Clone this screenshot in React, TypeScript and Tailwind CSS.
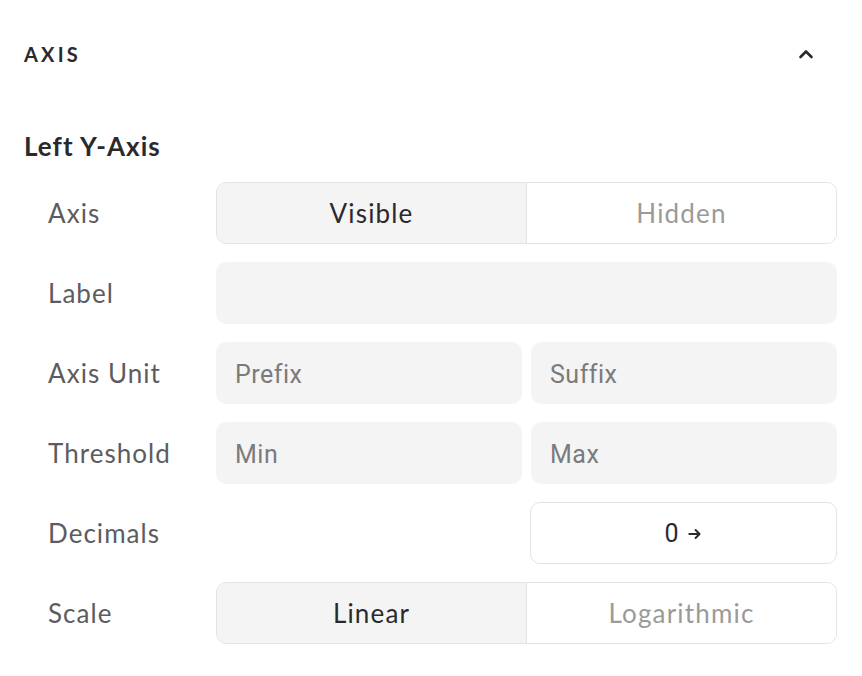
import React from "react";

const font = { fontFamily: "Lato, 'Noto Sans', sans-serif" };

function Label({ children }: { children: React.ReactNode }) {
  return (
    <div className="flex h-[62px] items-center pl-6 text-[26px] tracking-[0.04em] text-[#5c5c60]">{children}</div>
  );
}

function Segmented({ left, right }: { left: string; right: string }) {
  return (
    <div className="flex h-[62px] overflow-hidden rounded-[10px] border border-[#e3e3e3] text-[26px] tracking-[0.045em]">
      <div className="flex flex-1 items-center justify-center bg-[#f4f4f4] text-[#2a2a2e]">{left}</div>
      <div className="w-px bg-[#e3e3e3]" />
      <div className="flex flex-1 items-center justify-center bg-white text-[#9a9a9a]">{right}</div>
    </div>
  );
}

function Input({ placeholder }: { placeholder?: string }) {
  return (
    <div
      className="flex h-[62px] flex-1 items-center rounded-[10px] bg-[#f4f4f4] px-[19px] pt-[3px] text-[25px] tracking-[0.02em] text-[#7b7b7b]"
      style={{ fontFamily: "Roboto, 'Noto Sans', sans-serif" }}
    >
      {placeholder}
    </div>
  );
}

export default function App() {
  return (
    <div className="min-h-[676px] w-[862px] bg-white px-6 pt-[30px]" style={font}>
      <div className="flex h-12 items-center justify-between">
        <div className="text-[20px] font-bold tracking-[0.16em] text-[#2a2a2e]">AXIS</div>
        <svg width="18" height="18" viewBox="0 0 18 18" className="mr-[23px]" fill="none">
          <path d="M3.5 12 L9 6.5 L14.5 12" stroke="#2a2a2e" strokeWidth="2.6" strokeLinecap="round" strokeLinejoin="round" />
        </svg>
      </div>
      <div className="mt-[52px] h-8 text-[26px] font-bold leading-8 tracking-[0.04em] text-[#2a2a2e]">Left Y-Axis</div>
      <div className="mt-5 grid grid-cols-[192px_1fr] gap-y-[18px] pr-px">
        <Label>Axis</Label>
        <Segmented left="Visible" right="Hidden" />
        <Label>Label</Label>
        <div className="flex">
          <Input />
        </div>
        <Label>Axis Unit</Label>
        <div className="flex gap-[9px]">
          <Input placeholder="Prefix" />
          <Input placeholder="Suffix" />
        </div>
        <Label>Threshold</Label>
        <div className="flex gap-[9px]">
          <Input placeholder="Min" />
          <Input placeholder="Max" />
        </div>
        <Label>Decimals</Label>
        <div className="flex gap-[9px]">
          <div className="flex-1" />
          <div
            className="flex h-[62px] flex-1 items-center justify-center gap-2 rounded-[10px] border border-[#e3e3e3] bg-white pt-[2px] text-[25px] text-[#2a2a2e]"
            style={{ fontFamily: "Roboto, 'Noto Sans', sans-serif" }}
          >
            <span>0</span>
            <svg width="16" height="16" viewBox="0 0 14 14" fill="none">
              <path d="M2 7 H11 M7.5 3.5 L11 7 L7.5 10.5" stroke="#2a2a2e" strokeWidth="1.7" strokeLinecap="round" strokeLinejoin="round" />
            </svg>
          </div>
        </div>
        <Label>Scale</Label>
        <Segmented left="Linear" right="Logarithmic" />
      </div>
    </div>
  );
}
